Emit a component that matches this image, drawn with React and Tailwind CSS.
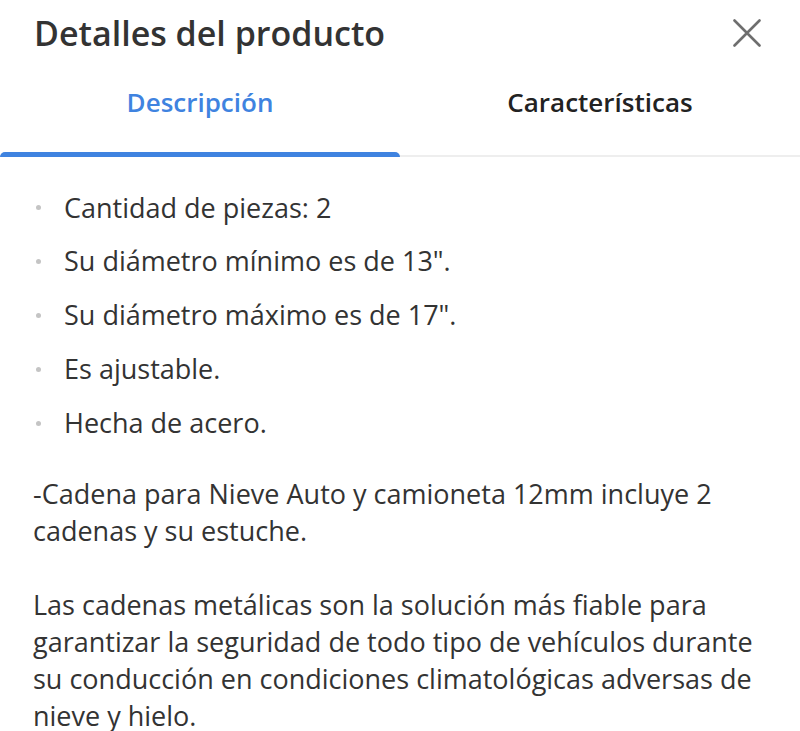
const bullets = [
  'Cantidad de piezas: 2',
  'Su diámetro mínimo es de 13".',
  'Su diámetro máximo es de 17".',
  'Es ajustable.',
  'Hecha de acero.',
]

export default function App() {
  return (
    <div className="min-h-[731px] bg-white font-['Open_Sans',sans-serif] text-[#333333]">
      <div className="flex items-center justify-between pl-[34px] pr-[39px] pt-[11px]">
        <h1 className="text-[34px] font-semibold leading-[44px] text-[#333333]">Detalles del producto</h1>
        <svg width="28" height="28" viewBox="0 0 28 28" className="text-[#6e6e6e]" fill="none" stroke="currentColor" strokeWidth="2.6" strokeLinecap="round">
          <path d="M1.5 1.5 26.5 26.5M26.5 1.5 1.5 26.5" />
        </svg>
      </div>

      <div className="mt-[12px] flex border-b-2 border-[#eeeeee]">
        <button className="relative flex h-[88px] flex-1 items-start justify-center pt-[16px] text-[26px] font-semibold text-[#3f83e0]">
          Descripción
          <span className="absolute -bottom-[2px] left-0 right-0 h-[5px] rounded-t-full bg-[#3f83e0]" />
        </button>
        <button className="flex h-[88px] flex-1 items-start justify-center pt-[16px] text-[26px] font-semibold text-[#222222]">
          Características
        </button>
      </div>

      <div className="px-[33px] pt-[24px] text-[27px]">
        <ul className="flex flex-col">
          {bullets.map((b) => (
            <li key={b} className="flex h-[53.8px] items-center">
              <span className="ml-[3px] mr-[23px] h-[5px] w-[5px] rounded-full bg-[#c4c4c4]" />
              {b}
            </li>
          ))}
        </ul>
        <p className="mt-[25px] leading-[37px]">
          -Cadena para Nieve Auto y camioneta 12mm incluye 2 cadenas y su estuche.
        </p>
        <p className="mt-[37px] leading-[37px]">
          Las cadenas metálicas son la solución más fiable para garantizar la seguridad de todo tipo de vehículos durante su conducción en condiciones climatológicas adversas de nieve y hielo.
        </p>
      </div>
    </div>
  )
}
